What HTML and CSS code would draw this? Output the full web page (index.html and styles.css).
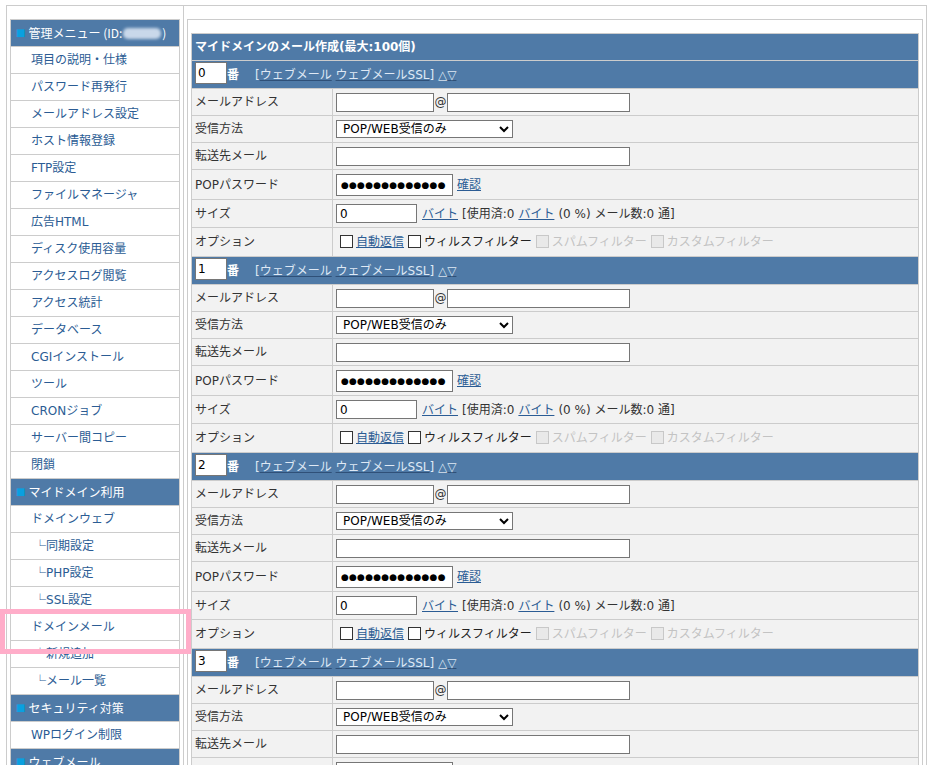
FILE: index.html
```html
<!DOCTYPE html>
<html lang="ja">
<head>
<meta charset="utf-8">
<title>マイドメインのメール作成</title>
<link rel="stylesheet" href="styles.css">
</head>
<body>
<div class="page">
  <div class="frame">
    <div class="side">
      <div class="menu">
        <div class="mhead"><span class="sq">■</span>管理メニュー (ID:<span class="blur"></span>)</div>
        <div class="mitem">項目の説明・仕様</div>
        <div class="mitem">パスワード再発行</div>
        <div class="mitem">メールアドレス設定</div>
        <div class="mitem">ホスト情報登録</div>
        <div class="mitem">FTP設定</div>
        <div class="mitem">ファイルマネージャ</div>
        <div class="mitem">広告HTML</div>
        <div class="mitem">ディスク使用容量</div>
        <div class="mitem">アクセスログ閲覧</div>
        <div class="mitem">アクセス統計</div>
        <div class="mitem">データベース</div>
        <div class="mitem">CGIインストール</div>
        <div class="mitem">ツール</div>
        <div class="mitem">CRONジョブ</div>
        <div class="mitem">サーバー間コピー</div>
        <div class="mitem">閉鎖</div>
        <div class="mhead"><span class="sq">■</span>マイドメイン利用</div>
        <div class="mitem">ドメインウェブ</div>
        <div class="mitem sub"><span class="lk">└</span>同期設定</div>
        <div class="mitem sub"><span class="lk">└</span>PHP設定</div>
        <div class="mitem sub"><span class="lk">└</span>SSL設定</div>
        <div class="mitem">ドメインメール</div>
        <div class="mitem sub"><span class="lk">└</span>新規追加</div>
        <div class="mitem sub"><span class="lk">└</span>メール一覧</div>
        <div class="mhead"><span class="sq">■</span>セキュリティ対策</div>
        <div class="mitem">WPログイン制限</div>
        <div class="mhead"><span class="sq">■</span>ウェブメール</div>
      </div>
    </div>
    <div class="main">
      <div class="box">
        <div class="mf">
          <div class="title">マイドメインのメール作成(最大:100個)</div>

          <div class="sec"><input class="num" type="text" value="0"><span class="ban">番</span><span class="sl">[<a href="#">ウェブメール</a> <a href="#">ウェブメールSSL</a>] <a href="#">△▽</a></span></div>
          <div class="row r1"><div class="lb">メールアドレス</div><div class="vl"><input class="tx w98" type="text"><span class="at">@</span><input class="tx w183" type="text"></div></div>
          <div class="row r1"><div class="lb">受信方法</div><div class="vl"><select class="sel"><option>POP/WEB受信のみ</option></select></div></div>
          <div class="row r1"><div class="lb">転送先メール</div><div class="vl"><input class="tx w294" type="text"></div></div>
          <div class="row r4"><div class="lb">POPパスワード</div><div class="vl"><input class="pw" type="text" value="●●●●●●●●●●●●●"><a class="lnk ml4" href="#">確認</a></div></div>
          <div class="row r5"><div class="lb">サイズ</div><div class="vl"><input class="tx w81" type="text" value="0"><a class="lnk ml5" href="#">バイト</a><span class="ml4">[使用済:0 </span><a class="lnk ml4" href="#">バイト</a><span class="ml4">(0 %) メール数:0 通]</span></div></div>
          <div class="row r6"><div class="lb">オプション</div><div class="vl opt"><span class="cb"></span><a class="lnk" href="#">自動返信</a><span class="cb"></span><span class="txt">ウィルスフィルター</span><span class="cb dis"></span><span class="dtx">スパムフィルター</span><span class="cb dis"></span><span class="dtx">カスタムフィルター</span></div></div>

          <div class="sec"><input class="num" type="text" value="1"><span class="ban">番</span><span class="sl">[<a href="#">ウェブメール</a> <a href="#">ウェブメールSSL</a>] <a href="#">△▽</a></span></div>
          <div class="row r1"><div class="lb">メールアドレス</div><div class="vl"><input class="tx w98" type="text"><span class="at">@</span><input class="tx w183" type="text"></div></div>
          <div class="row r1"><div class="lb">受信方法</div><div class="vl"><select class="sel"><option>POP/WEB受信のみ</option></select></div></div>
          <div class="row r1"><div class="lb">転送先メール</div><div class="vl"><input class="tx w294" type="text"></div></div>
          <div class="row r4"><div class="lb">POPパスワード</div><div class="vl"><input class="pw" type="text" value="●●●●●●●●●●●●●"><a class="lnk ml4" href="#">確認</a></div></div>
          <div class="row r5"><div class="lb">サイズ</div><div class="vl"><input class="tx w81" type="text" value="0"><a class="lnk ml5" href="#">バイト</a><span class="ml4">[使用済:0 </span><a class="lnk ml4" href="#">バイト</a><span class="ml4">(0 %) メール数:0 通]</span></div></div>
          <div class="row r6"><div class="lb">オプション</div><div class="vl opt"><span class="cb"></span><a class="lnk" href="#">自動返信</a><span class="cb"></span><span class="txt">ウィルスフィルター</span><span class="cb dis"></span><span class="dtx">スパムフィルター</span><span class="cb dis"></span><span class="dtx">カスタムフィルター</span></div></div>

          <div class="sec"><input class="num" type="text" value="2"><span class="ban">番</span><span class="sl">[<a href="#">ウェブメール</a> <a href="#">ウェブメールSSL</a>] <a href="#">△▽</a></span></div>
          <div class="row r1"><div class="lb">メールアドレス</div><div class="vl"><input class="tx w98" type="text"><span class="at">@</span><input class="tx w183" type="text"></div></div>
          <div class="row r1"><div class="lb">受信方法</div><div class="vl"><select class="sel"><option>POP/WEB受信のみ</option></select></div></div>
          <div class="row r1"><div class="lb">転送先メール</div><div class="vl"><input class="tx w294" type="text"></div></div>
          <div class="row r4"><div class="lb">POPパスワード</div><div class="vl"><input class="pw" type="text" value="●●●●●●●●●●●●●"><a class="lnk ml4" href="#">確認</a></div></div>
          <div class="row r5"><div class="lb">サイズ</div><div class="vl"><input class="tx w81" type="text" value="0"><a class="lnk ml5" href="#">バイト</a><span class="ml4">[使用済:0 </span><a class="lnk ml4" href="#">バイト</a><span class="ml4">(0 %) メール数:0 通]</span></div></div>
          <div class="row r6"><div class="lb">オプション</div><div class="vl opt"><span class="cb"></span><a class="lnk" href="#">自動返信</a><span class="cb"></span><span class="txt">ウィルスフィルター</span><span class="cb dis"></span><span class="dtx">スパムフィルター</span><span class="cb dis"></span><span class="dtx">カスタムフィルター</span></div></div>

          <div class="sec"><input class="num" type="text" value="3"><span class="ban">番</span><span class="sl">[<a href="#">ウェブメール</a> <a href="#">ウェブメールSSL</a>] <a href="#">△▽</a></span></div>
          <div class="row r1"><div class="lb">メールアドレス</div><div class="vl"><input class="tx w98" type="text"><span class="at">@</span><input class="tx w183" type="text"></div></div>
          <div class="row r1"><div class="lb">受信方法</div><div class="vl"><select class="sel"><option>POP/WEB受信のみ</option></select></div></div>
          <div class="row r1"><div class="lb">転送先メール</div><div class="vl"><input class="tx w294" type="text"></div></div>
          <div class="row r4"><div class="lb">POPパスワード</div><div class="vl"><input class="pw" type="text" value="●●●●●●●●●●●●●"><a class="lnk ml4" href="#">確認</a></div></div>
        </div>
      </div>
    </div>
  </div>
  <div class="hl"></div>
</div>
</body>
</html>
```
FILE: styles.css
```css
html, body {
  margin: 0;
  padding: 0;
  overflow: hidden;
  background: #fff;
}
body {
  font-family: "DejaVu Sans", "Noto Sans CJK JP", sans-serif;
  font-size: 12px;
  line-height: 16px;
  color: #333;
}
.page {
  position: relative;
}
.frame {
  margin: 5px 0 0 6px;
  width: 921px;
  border: 1px solid #ccc;
  display: flex;
  box-sizing: border-box;
}
.side {
  width: 177px;
  flex: none;
  box-sizing: border-box;
  border-right: 1px solid #ccc;
  padding: 13px 3px 20px;
}
.menu {
  border: 1px solid #ccc;
}
.menu > * + * {
  border-top: 1px solid #ccc;
}
.mhead {
  height: 26px;
  background: #4f7aa7;
  color: #fff;
  display: flex;
  align-items: center;
  padding-left: 5px;
  font-family: "Noto Sans CJK JP", sans-serif;
}
.sq {
  font-family: "DejaVu Sans", sans-serif;
  color: #0aa0e0;
  font-size: 10px;
  margin-right: 3px;
}
.blur {
  display: inline-block;
  width: 38px;
  height: 11px;
  margin: 0 1px;
  background: #c9d8ea;
  border-radius: 5px;
  filter: blur(1.5px);
}
.mitem {
  height: 26px;
  display: flex;
  align-items: center;
  padding-left: 20px;
  background: #fff;
  color: #2b5c94;
}
.mitem.sub {
  padding-left: 23px;
}
.lk {
  font-family: "Noto Sans CJK JP", sans-serif;
}
.main {
  flex: 1;
  padding: 13px 3px 0;
}
.box {
  border: 1px solid #ccc;
  padding: 13px 3px 13px;
}
.mf {
  border: 1px solid #ccc;
  border-bottom: none;
}
.title {
  height: 26px;
  background: #4f7aa7;
  color: #fff;
  font-weight: bold;
  display: flex;
  align-items: center;
  padding-left: 3px;
  border-bottom: 1px solid #ccc;
}
.sec {
  height: 27px;
  background: #4f7aa7;
  color: #fff;
  display: flex;
  align-items: center;
  padding-left: 3px;
  border-bottom: 1px solid #ccc;
}
.ban {
  font-weight: bold;
}
.num {
  width: 32px;
  height: 22px;
  box-sizing: border-box;
  border: 1px solid #767676;
  padding: 0 2px;
  margin: 0 0 4px 0;
  font-family: "DejaVu Sans", sans-serif;
  font-size: 12px;
  color: #000;
  background: #fff;
}
.sl {
  margin-left: 16px;
  color: #dfe9f5;
}
.sl a {
  color: #dfe9f5;
  text-decoration: underline;
  text-decoration-color: #2f5078;
}
.row {
  display: flex;
  background: #f2f2f2;
  border-bottom: 1px solid #ccc;
}
.r1 { height: 26px; }
.r4 { height: 29px; }
.r5 { height: 27px; }
.r6 { height: 28px; }
.lb {
  flex: none;
  border-right: 1px solid #ccc;
  display: flex;
  align-items: center;
  padding-left: 3px;
  box-sizing: content-box;
  width: 137px;
}
.vl {
  flex: 1;
  display: flex;
  align-items: center;
  padding-left: 3px;
  white-space: nowrap;
}
.tx {
  height: 19px;
  box-sizing: border-box;
  border: 1px solid #767676;
  padding: 0 3px;
  font-family: "DejaVu Sans", sans-serif;
  font-size: 12px;
  color: #000;
  background: #fff;
  margin: 0;
}
.w98 { width: 98px; }
.w183 { width: 183px; }
.w294 { width: 294px; }
.w81 { width: 81px; }
.at {
  width: 13px;
  text-align: center;
  color: #333;
}
.sel {
  width: 177px;
  height: 18px;
  box-sizing: border-box;
  border: 1px solid #767676;
  border-radius: 0;
  background: #fff;
  font-family: "DejaVu Sans", "Noto Sans CJK JP", sans-serif;
  font-size: 12px;
  color: #000;
  padding: 0 0 0 2px;
  margin: 0;
}
.pw {
  width: 117px;
  height: 22px;
  box-sizing: border-box;
  border: 1px solid #767676;
  padding: 0 0 0 4px;
  margin: 0;
  font-family: "DejaVu Sans", sans-serif;
  font-size: 9px;
  letter-spacing: 0.2px;
  color: #000;
  background: #fff;
}
.lnk {
  color: #2b5c94;
  text-decoration: underline;
}
.ml4 { margin-left: 4px; }
.ml5 { margin-left: 5px; }
.opt {
  padding-left: 7px;
}
.cb {
  width: 13px;
  height: 13px;
  box-sizing: border-box;
  border: 1px solid #333;
  background: #fff;
  margin: 0 3px 2px 0;
  flex: none;
}
.cb.dis {
  border-color: #c8c8c8;
  background: #e9e9e9;
}
.opt .lnk + .cb,
.opt .txt + .cb,
.opt .dtx + .cb {
  margin-left: 4px;
}
.txt {
  color: #222;
}
.dtx {
  color: #c3c3c3;
}
.hl {
  position: absolute;
  left: 0;
  top: 604px;
  width: 191px;
  height: 45px;
  box-sizing: border-box;
  border: 5px solid #ffadc9;
}
```
